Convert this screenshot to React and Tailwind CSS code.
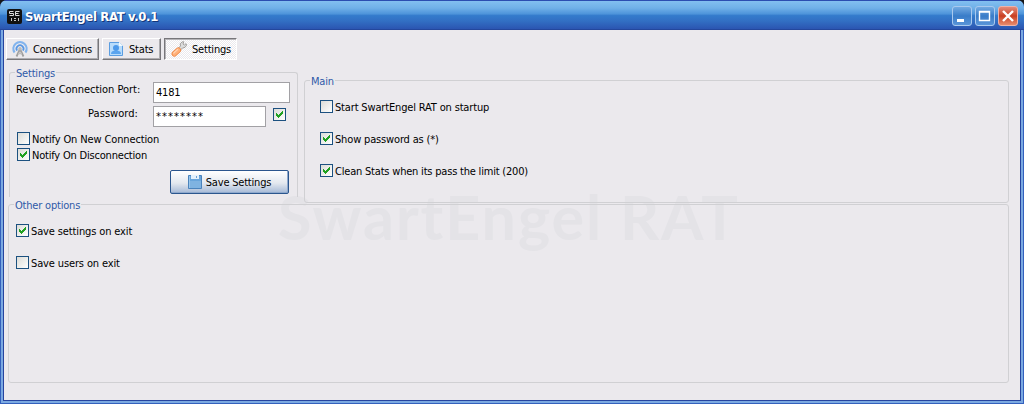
import React from "react";

function Checkbox({ checked }) {
  return (
    <span className="block size-[13px] shrink-0 border border-[#1c5180] bg-linear-to-br from-[#dcdcd7] to-white">
      {checked && (
        <svg viewBox="0 0 11 11" className="block size-[11px]" shapeRendering="crispEdges" fill="#21a121">
          <path d="M2 4h1v1h1v1h1v-1h1v-1h1v-1h1v-1h1v3h-1v1h-1v1h-1v1h-1v1h-1v-1h-1v-1h-1z" />
        </svg>
      )}
    </span>
  );
}

function Option({ label, checked, className = "" }) {
  return (
    <div className={"flex h-[13px] items-center gap-[2px] whitespace-nowrap " + className}>
      <Checkbox checked={checked} />
      <span className="pt-[2px] leading-[13px]">{label}</span>
    </div>
  );
}

function Group({ title, className, children }) {
  return (
    <fieldset className={"m-0 min-w-0 border border-[#d0d0d3] p-0 " + className}>
      <legend className="ml-[5px] h-[13px] px-[1px] leading-[15px] text-[#2f5aa8]">{title}</legend>
      {children}
    </fieldset>
  );
}

function AntennaIcon() {
  return (
    <svg viewBox="0 0 16 16" className="size-4 shrink-0" fill="none">
      <path d="M2.6 11.5A6.600 6.600 0 1 1 13.400 11.500" stroke="#82b4ee" strokeWidth="2.200" />
      <path d="M5 9.600A3.500 3.500 0 1 1 11 9.600" stroke="#5a98e4" strokeWidth="1.800" />
      <path d="M8 8 4.500 15.500M8 8l3.500 7.500" stroke="#a0a0a0" strokeWidth="1.800" />
      <path d="M6 12.500h4" stroke="#bdbdbd" strokeWidth="1.400" />
      <circle cx="8" cy="7.800" r="1.700" fill="#b9b9b9" />
    </svg>
  );
}

function StatsIcon() {
  return (
    <svg viewBox="0 0 16 16" className="size-4 shrink-0">
      <path d="M1.500 1.500h9.500l3.500 3.500v9.500h-13z" fill="#b8dcfb" stroke="#5b9de0" />
      <path d="M3 13c0-2 1.500-3.200 3.500-3.200h3c2 0 3.500 1.200 3.500 3.200z" fill="#5ba4ee" />
      <circle cx="8" cy="7" r="3" fill="#4c99ea" />
      <path d="M11 1l4 4h-4z" fill="#f2faff" />
    </svg>
  );
}

function WrenchIcon() {
  return (
    <svg viewBox="0 0 16 16" className="size-4 shrink-0">
      <path d="M7 7.500l2.500-2.500-.3-2.300L11.200.8h1.600l-.8 2.200 1.400 1 1.600-1.300.6 1.500-1.600 2.200-2.500.6L9 9.500z" fill="#dcdcdc" stroke="#9b9795" strokeWidth=".9" />
      <path d="M3.400 12.800 7.300 9.200" stroke="#ef8744" strokeWidth="5.600" strokeLinecap="round" />
      <path d="M3.400 12.800 7.300 9.200" stroke="#ffb079" strokeWidth="4" strokeLinecap="round" />
      <path d="M2.800 12 6.600 8.500" stroke="#ffd3b2" strokeWidth="1.200" strokeLinecap="round" />
    </svg>
  );
}

function DiskIcon() {
  return (
    <svg viewBox="0 0 14 14" className="size-[14px] shrink-0">
      <path d="M.5.5h13v13h-13z" fill="#69a5db" stroke="#4a83bc" />
      <path d="M1 6h12v7H1z" fill="#7fb3e1" />
      <path d="M3 0h8v4H3z" fill="#e3f0fb" />
      <path d="M8 1h1v2H8z" fill="#6b9fd2" />
      <path d="M1 1h1v12H1z" fill="#98c6ec" />
    </svg>
  );
}

function Tab({ icon, label, active, className }) {
  return (
    <div
      className={
        "flex h-[22px] items-center whitespace-nowrap border " +
        (active
          ? "border-t-[#77767a] border-l-[#77767a] border-r-white border-b-white bg-[#f4f3f5] shadow-[inset_1px_1px_0_#b5b4b8] "
          : "border-t-white border-l-white border-r-[#77767a] border-b-[#77767a] shadow-[inset_-1px_-1px_0_#adacb0] ") +
        className
      }
    >
      {icon}
      <span className="pt-[2px]">{label}</span>
    </div>
  );
}

function WindowButton({ close, children }) {
  return (
    <div
      className={
        "flex size-[20px] items-center justify-center rounded-[3px] border " +
        (close
          ? "border-[#efb2a8] bg-linear-to-b from-[#e28a79] via-[#c93e20] via-50% to-[#e68a6c]"
          : "border-[#a9c9ee] bg-linear-to-b from-[#72aae2] via-[#397cc8] via-50% to-[#5995d8]")
      }
    >
      <svg viewBox="0 0 18 18" className="size-[18px] shrink-0" fill="none" stroke="#fff">
        {children}
      </svg>
    </div>
  );
}

export default function App() {
  return (
    <div className="h-[404px] w-[1024px] overflow-hidden bg-[#171717] font-['DejaVu_Sans_Condensed','DejaVu_Sans',sans-serif] text-[11px] tracking-[-0.2px] text-black">
      <div className="flex h-full flex-col overflow-hidden rounded-t-[7px] bg-[#2c57b5]">
        <header className="flex h-[30px] shrink-0 items-center border-t border-b border-t-[#2b4db0] border-b-[#24479c] bg-[linear-gradient(to_bottom,#82bff0_0%,#70b0e8_25%,#4e94da_46%,#347bcc_52%,#326fc3_72%,#2b55b1_100%)] pr-[6px] pl-[7px]">
          <div className="mt-[2px] flex size-[15px] flex-col items-center overflow-hidden rounded-[2px] bg-[#111] pt-px text-white">
            <svg viewBox="0 0 15 13" className="h-[13px] w-[15px]" fill="none" stroke="#ddd">
              <path d="M6.5 1.5h-4v2h4v2h-4M12.5 1.5h-4v4h4M8.5 3.5h3" />
              <path d="M4.5 8v3M7 8.5h2M7 10.5h2M11.5 8v3" strokeWidth=".9" />
            </svg>
          </div>
          <h1 className="ml-[3px] flex-1 pt-[4px] text-[13px] leading-[16px] font-bold tracking-[-0.35px] whitespace-nowrap text-white [text-shadow:1px_1px_0_#153578]">
            SwartEngel RAT v.0.1
          </h1>
          <div className="flex gap-[3px] pt-[2px]">
            <WindowButton>
              <path d="M4 13.5h7" strokeWidth="3" />
            </WindowButton>
            <WindowButton>
              <path d="M3.5 4.5h10v9h-10zM3 5h11" strokeWidth="1.4" />
            </WindowButton>
            <WindowButton close>
              <path d="m4 4 10 10M14 4 4 14" strokeWidth="2.4" />
            </WindowButton>
          </div>
        </header>

        <div className="min-h-0 flex-1 border-r border-b border-l border-[#3360bd] bg-[#7ba9e1] px-[2px] pb-[2px]">
          <main className="relative h-full border-r border-b border-l border-[#26449f] bg-[#ebe9ed]">
            <div
              aria-hidden="true"
              className="pointer-events-none absolute top-[150px] left-[274px] font-['Lato',sans-serif] text-[61px] leading-[73px] font-bold tracking-[1.95px] whitespace-nowrap text-[#e4e3e7]"
            >
              SwartEngel RAT
            </div>
            <div className="relative flex flex-col">
              <nav className="flex gap-[3px] pt-[8px] pl-[2px]">
                <Tab icon={<AntennaIcon />} label="Connections" className="w-[93px] gap-[5px] pl-[5px]" />
                <Tab icon={<StatsIcon />} label="Stats" className="w-[59px] gap-[5px] pl-[5px]" />
                <Tab
                  icon={<WrenchIcon />}
                  label="Settings"
                  active
                  className="w-[73px] gap-[5px] bg-[repeating-conic-gradient(#ebe9ed_0_25%,#fff_0_50%)] bg-size-[2px_2px] pl-[6px]"
                />
              </nav>

              <div className="flex h-[137px] items-start pt-[6px] pl-[5px]">
                <Group title="Settings" className="h-[131px] w-[289px] rounded-t-[3px] border-b-0">
                  <div className="flex h-[22px] items-start pt-[3px] pl-[6px]">
                    <label className="w-[137px] tracking-[-0.03px] whitespace-nowrap leading-[16px]">Reverse Connection Port:</label>
                    <div className="h-[21px] w-[137px] border border-[#a2a1a5] bg-white pl-[2px] leading-[20px]">4181</div>
                  </div>
                  <div className="mt-[5px] flex h-[21px] items-start pl-[6px]">
                    <label className="w-[137px] pr-[15px] text-right tracking-[0.05px] leading-[16px]">Password:</label>
                    <div className="h-[21px] w-[113px] border border-[#a2a1a5] bg-white pl-[2px] leading-[19px] tracking-[1.05px]">
                      ********
                    </div>
                    <div className="mt-[2px] ml-[7px]">
                      <Checkbox checked />
                    </div>
                  </div>
                  <div className="mt-[5px] flex flex-col gap-[3px] pl-[7px]">
                    <Option label="Notify On New Connection" className="tracking-[-0.13px]" />
                    <Option label="Notify On Disconnection" checked />
                  </div>
                  <div className="flex justify-end pt-[9px] pr-[8px]">
                    <button className="flex h-[24px] w-[119px] items-center justify-center gap-[4px] rounded-[2px] border border-[#2b568e] bg-linear-to-b from-white via-[#e3e8ef] via-55% to-[#a5b9d6] whitespace-nowrap shadow-[inset_-1px_-1px_0_#8fa9cd]">
                      <DiskIcon />
                      <span className="pt-[2px]">Save Settings</span>
                    </button>
                  </div>
                </Group>

                <Group title="Main" className="mt-[8px] ml-[6px] h-[129px] w-[705px] rounded-[3px]">
                  <div className="flex flex-col gap-[19px] pt-[13px] pl-[15px]">
                    <Option label="Start SwartEngel RAT on startup" className="tracking-[-0.16px]" />
                    <Option label="Show password as (*)" checked className="tracking-[-0.16px]" />
                    <Option label="Clean Stats when its pass the limit (200)" checked />
                  </div>
                </Group>
              </div>

              <div className="mt-[1px] pl-[4px]">
                <Group title="Other options" className="h-[185px] w-[1001px] rounded-[3px]">
                  <div className="flex flex-col gap-[19px] pt-[13px] pl-[7px]">
                    <Option label="Save settings on exit" checked className="tracking-[-0.13px]" />
                    <Option label="Save users on exit" className="tracking-[-0.13px]" />
                  </div>
                </Group>
              </div>
            </div>
          </main>
        </div>
      </div>
    </div>
  );
}
